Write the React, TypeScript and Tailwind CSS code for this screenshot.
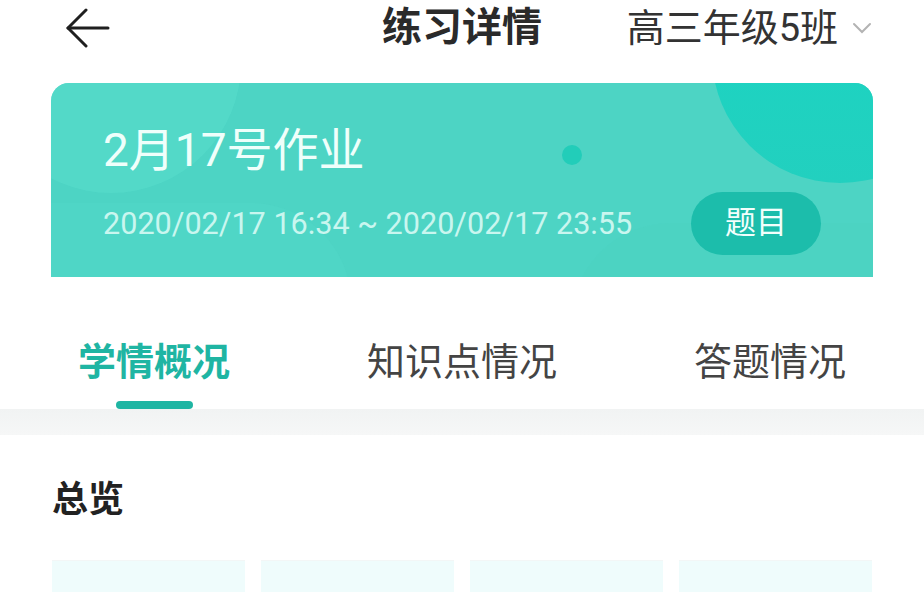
import React from 'react';

const FONT = 'font-["Roboto","Noto_Sans_CJK_SC",sans-serif]';

const tabs = ['学情概况', '知识点情况', '答题情况'];

export default function App() {
  return (
    <div className={`w-[924px] h-[592px] overflow-hidden bg-white ${FONT}`}>
      {/* top bar */}
      <div className="grid grid-cols-3 items-center h-[56px]">
        <div className="pl-[65px] flex items-center">
          <svg width="45" height="40" viewBox="0 0 45 40" fill="none" stroke="#1f1f1f" strokeWidth="3" strokeLinecap="round" strokeLinejoin="round">
            <path d="M43 20H3" />
            <path d="M21 2L3 20L21 38" />
          </svg>
        </div>
        <div className="text-center text-[40px] leading-[48px] font-bold text-[#2a2a2a]">练习详情</div>
        <div className="flex items-center justify-end pr-[52px] gap-[14px]">
          <span className="text-[38px] leading-[46px] text-[#333]">高三年级5班</span>
          <svg width="20" height="12" viewBox="0 0 20 12" fill="none" stroke="#b3b3b3" strokeWidth="2" strokeLinecap="round">
            <path d="M2 2L10 10L18 2" />
          </svg>
        </div>
      </div>

      {/* banner */}
      <div className="relative mx-[51px] mt-[27px] h-[194px] rounded-t-[18px] overflow-hidden bg-[#4dd4c4]">
        <div className="absolute -left-[70px] -top-[150px] w-[260px] h-[260px] rounded-full bg-[#55dccb] opacity-70" />
        <div className="absolute -left-[120px] top-[120px] w-[420px] h-[200px] rounded-full bg-[#52d8c8] opacity-50" />
        <div className="absolute left-[661px] -top-[156px] w-[256px] h-[256px] rounded-full bg-gradient-to-b from-[#17d6c3] to-[#22d0bf]" />
        <div className="absolute left-[520px] top-[140px] w-[420px] h-[200px] rounded-full bg-[#4ad1c1] opacity-40" />
        <div className="absolute left-[511px] top-[62px] w-[20px] h-[20px] rounded-full bg-[#22cdb9]" />
        <div className="relative flex flex-col pt-[42px] px-[52px]">
          <div className="text-[46px] leading-[50px] text-[#effffb]">2月17号作业</div>
          <div className="mt-[17px] flex items-center justify-between h-[63px]">
            <span className="text-[30.6px] text-[#c9f6ef]">2020/02/17 16:34 ~ 2020/02/17 23:55</span>
            <span className="w-[130px] h-[63px] rounded-full bg-[#1cbdab] flex items-center justify-center text-[31px] text-[#f2fffc]">题目</span>
          </div>
        </div>
      </div>

      {/* tabs */}
      <div className="grid grid-cols-3 pt-[62px]">
        {tabs.map((t, i) => (
          <div key={t} className="flex flex-col items-center">
            <span className={`text-[38px] leading-[46px] ${i === 0 ? 'text-[#1fb5a3] font-bold' : 'text-[#444]'}`}>{t}</span>
            <div className={`mt-[16px] h-[8px] w-[77px] rounded-full ${i === 0 ? 'bg-[#1fb5a3]' : 'bg-transparent'}`} />
          </div>
        ))}
      </div>
      <div className="h-[26px] bg-gradient-to-b from-[#f1f3f3] to-[#f6f7f7]" />

      {/* overview */}
      <div className="px-[52px] pt-[44px]">
        <div className="text-[36px] leading-[42px] font-bold text-[#222]">总览</div>
        <div className="mt-[39px] grid grid-cols-4 gap-[16px]">
          {[0, 1, 2, 3].map((k) => (
            <div key={k} className="h-[120px] bg-[#effcfc] border-t border-[#f3f6f6]" />
          ))}
        </div>
      </div>
    </div>
  );
}
